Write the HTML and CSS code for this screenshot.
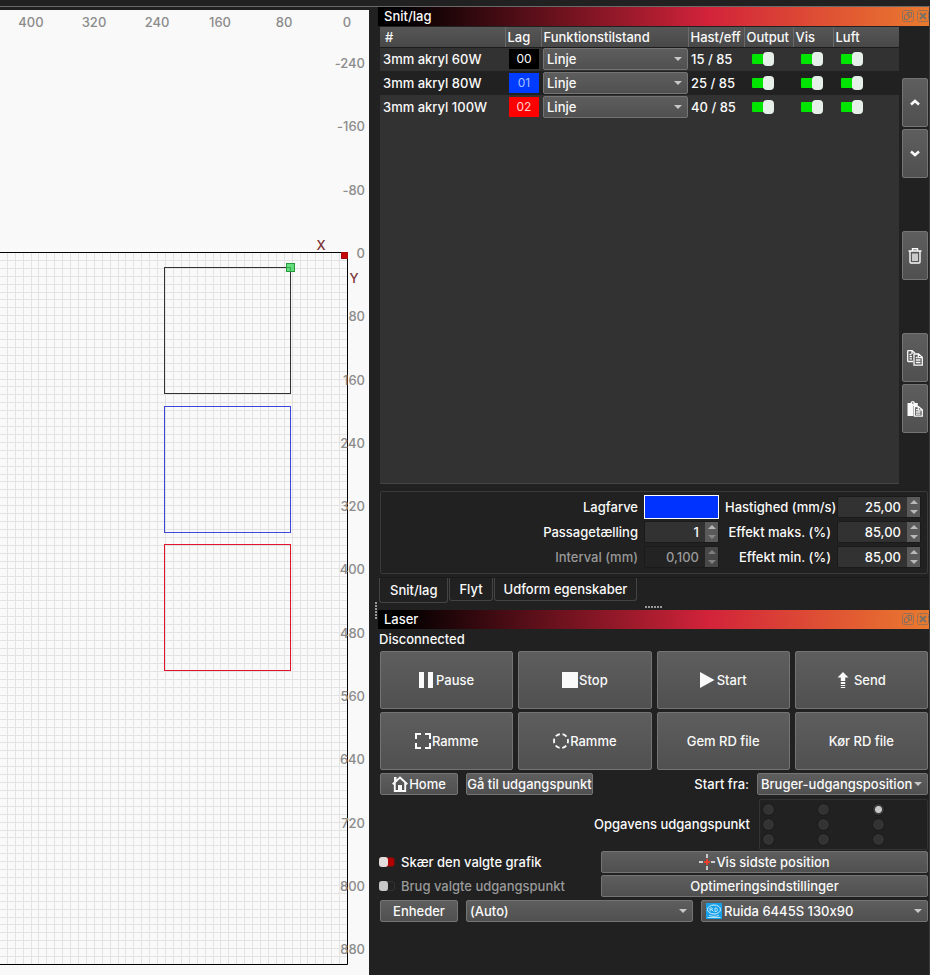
FILE: index.html
```html
<!DOCTYPE html>
<html lang="da">
<head>
<meta charset="utf-8">
<title>Laser</title>
<link rel="stylesheet" href="styles.css">
</head>
<body>
<svg class="defs" aria-hidden="true">
  <symbol id="i-float" viewBox="0 0 12 12"><rect x=".5" y=".5" width="11" height="11" rx="2" fill="none" stroke="currentColor" stroke-dasharray="2 .6"/><path d="M5 2.500h4.500V7H7.500M2.500 5.500l2-1.500h2.500v4L5 9.500H2.500z M4.500 4.500l3 3" fill="none" stroke="currentColor"/></symbol>
  <symbol id="i-close" viewBox="0 0 12 12"><rect x=".5" y=".5" width="11" height="11" rx="2" fill="none" stroke="currentColor" stroke-dasharray="2 .6"/><path d="M3 3l6 6M9 3L3 9" fill="none" stroke="currentColor" stroke-width="2"/></symbol>
</svg>
<header class="topbar"></header>
<main class="app">
  <section class="canvas" aria-label="Arbejdsområde">
    <svg class="bed" viewBox="0 10 369 965" preserveAspectRatio="xMaxYMin slice">
      <g id="grid" class="grid"></g>
      <path class="bed-edge" d="M0 252.500H347.500V964.500H0"/>
      <g id="ruler" class="ruler"></g>
      <rect class="shape black" x="164.500" y="267.500" width="126" height="126"/>
      <rect class="shape blue" x="164.500" y="406.500" width="126" height="126"/>
      <rect class="shape red" x="164.500" y="544.500" width="126" height="126"/>
      <rect class="handle" x="286.500" y="263.500" width="8" height="8"/>
      <rect class="origin" x="341.500" y="252.500" width="6" height="6"/>
      <text class="axis" x="321" y="250">X</text>
      <text class="axis" x="354" y="283">Y</text>
    </svg>
  </section>
  <div class="splitter"><i></i></div>
  <div class="side">
    <section class="cuts">
      <h2 class="dock-title"><span>Snit/lag</span><svg><use href="#i-float"/></svg><svg><use href="#i-close"/></svg></h2>
      <div class="cuts-body">
        <div class="layer-list">
          <table>
            <colgroup><col class="c-name"><col class="c-lag"><col class="c-mode"><col class="c-speed"><col class="c-out"><col class="c-vis"><col></colgroup>
            <thead><tr><th>#</th><th>Lag</th><th>Funktionstilstand</th><th>Hast/eff</th><th>Output</th><th>Vis</th><th>Luft</th></tr></thead>
            <tbody>
              <tr><td>3mm akryl 60W</td><td><span class="chip k">00</span></td><td><span class="pick"><select aria-label="Funktion 00"><option>Linje</option></select></span></td><td>15 / 85</td><td><input class="toggle" type="checkbox" checked aria-label="Output 00"></td><td><input class="toggle" type="checkbox" checked aria-label="Vis 00"></td><td><input class="toggle" type="checkbox" checked aria-label="Luft 00"></td></tr>
              <tr><td>3mm akryl 80W</td><td><span class="chip b">01</span></td><td><span class="pick"><select aria-label="Funktion 01"><option>Linje</option></select></span></td><td>25 / 85</td><td><input class="toggle" type="checkbox" checked aria-label="Output 01"></td><td><input class="toggle" type="checkbox" checked aria-label="Vis 01"></td><td><input class="toggle" type="checkbox" checked aria-label="Luft 01"></td></tr>
              <tr><td>3mm akryl 100W</td><td><span class="chip r">02</span></td><td><span class="pick"><select aria-label="Funktion 02"><option>Linje</option></select></span></td><td>40 / 85</td><td><input class="toggle" type="checkbox" checked aria-label="Output 02"></td><td><input class="toggle" type="checkbox" checked aria-label="Vis 02"></td><td><input class="toggle" type="checkbox" checked aria-label="Luft 02"></td></tr>
            </tbody>
          </table>
        </div>
        <div class="tools">
          <button class="up" aria-label="Op"><svg viewBox="0 0 16 16"><path d="M4 9.500L8 6l4 3.500" fill="none" stroke="currentColor" stroke-width="2.600"/></svg></button>
          <button class="down" aria-label="Ned"><svg viewBox="0 0 16 16"><path d="M4 5.500L8 9l4-3.500" fill="none" stroke="currentColor" stroke-width="2.600"/></svg></button>
          <button class="trash" aria-label="Slet"><svg viewBox="0 0 16 16"><path d="M1.500 3h13M5.500 2.500V.8h5v1.700M3 3.500V14q0 1 1 1h8q1 0 1-1V3.500M6 5.500V13M8 5.500V13M10 5.500V13" fill="none" stroke="currentColor" stroke-width="1.400"/></svg></button>
          <button class="copy" aria-label="Kopiér"><svg viewBox="0 0 16 16"><path d="M6 11.500H1.500q-.8 0-.8-.8V1.300q0-.8.800-.8H5L8 3.300M5 .8V4M2.500 4.500h2M2.500 6.700H5M2.500 8.900H5" fill="none" stroke="currentColor" stroke-width="1.300"/><path d="M7 4h4.500L15.300 7.300v7.900H7z M11.300 4v3.600h4M8.800 7.500h1.500M8.800 10h4.700M8.800 12.500h4.700" fill="none" stroke="currentColor" stroke-width="1.300"/></svg></button>
          <button class="paste" aria-label="Sæt ind"><svg viewBox="0 0 16 16"><path d="M1 2h2.500Q4 0 5.800 0T8 2h2.800v3H6.500v10H1q-.5 0-.5-.5v-12Q.5 2 1 2z" fill="currentColor"/><circle cx="5.800" cy="2" r=".8" fill="#555"/><path d="M7.500 5.600h4l3.800 3.300v6.300H7.500z M11.300 5.600v3.500h4M9 8.600h1.500M9 11h4.500M9 13.200h4.500" fill="none" stroke="currentColor" stroke-width="1.300"/></svg></button>
        </div>
      </div>
      <div class="props">
        <label for="farve">Lagfarve</label>
        <button id="farve" class="swatch" aria-label="Lagfarve"></button>
        <label for="hast">Hastighed (mm/s)</label>
        <span class="spin"><input id="hast" value="25,00"><button aria-label="Mere"></button><button aria-label="Mindre"></button></span>
        <label for="pass">Passagetælling</label>
        <span class="spin min"><input id="pass" value="1"><button aria-label="Mere"></button><button aria-label="Mindre"></button></span>
        <label for="maks">Effekt maks. (%)</label>
        <span class="spin"><input id="maks" value="85,00"><button aria-label="Mere"></button><button aria-label="Mindre"></button></span>
        <label for="interval" class="dim">Interval (mm)</label>
        <span class="spin off"><input id="interval" value="0,100" disabled><button aria-label="Mere" disabled></button><button aria-label="Mindre" disabled></button></span>
        <label for="min">Effekt min. (%)</label>
        <span class="spin"><input id="min" value="85,00"><button aria-label="Mere"></button><button aria-label="Mindre"></button></span>
      </div>
      <nav class="tabs"><button class="on">Snit/lag</button><button>Flyt</button><button>Udform egenskaber</button></nav>
      <div class="grip"></div>
    </section>
    <section class="laser">
      <h2 class="dock-title"><span>Laser</span><svg><use href="#i-float"/></svg><svg><use href="#i-close"/></svg></h2>
      <p class="status">Disconnected</p>
      <div class="actions">
        <button><svg viewBox="0 0 16 16"><path d="M0 0h5v16H0zM9 0h5v16H9z" fill="currentColor"/></svg>Pause</button>
        <button><svg viewBox="0 0 16 16"><path d="M0 0h16v16H0z" fill="currentColor"/></svg>Stop</button>
        <button><svg viewBox="0 0 16 16"><path d="M0 0l14.500 8L0 16z" fill="currentColor"/></svg>Start</button>
        <button><svg viewBox="0 0 16 16"><path d="M6 0l5.500 5.500H8.200V9H3.800V5.500H.5zM3.800 10h4.400v2H3.800zM3.800 13h4.400v1H3.800zM3.800 15h4.400v1H3.800z" fill="currentColor"/></svg>Send</button>
        <button><svg viewBox="0 0 16 16"><path d="M1 6V1h5M10 1h5v5M15 10v5h-5M6 15H1v-5" fill="none" stroke="currentColor" stroke-width="2"/></svg>Ramme</button>
        <button><svg viewBox="0 0 16 16"><circle cx="8" cy="8" r="7" fill="none" stroke="currentColor" stroke-width="1.800" stroke-dasharray="4.600 2.730" stroke-dashoffset="2.300"/></svg>Ramme</button>
        <button>Gem RD file</button>
        <button>Kør RD file</button>
      </div>
      <div class="row home-row">
        <button class="w78"><svg viewBox="0 0 16 16"><path d="M.7 8.200L8 1.500l7.300 6.700M2.800 7v8h10.400V7" fill="none" stroke="currentColor" stroke-width="1.900"/><path d="M6 9h4v6H6zM2 1h2.500v4L2 7z" fill="currentColor"/></svg>Home</button>
        <button class="w127">Gå til udgangspunkt</button>
        <label for="fra" class="push">Start fra:</label>
        <span class="pick w171"><select id="fra"><option>Bruger-udgangsposition</option></select></span>
      </div>
      <div class="job">
        <span>Opgavens udgangspunkt</span>
        <div class="dots" role="radiogroup" aria-label="Opgavens udgangspunkt">
          <input type="radio" name="o" aria-label="1"><input type="radio" name="o" aria-label="2"><input type="radio" name="o" aria-label="3" checked>
          <input type="radio" name="o" aria-label="4"><input type="radio" name="o" aria-label="5"><input type="radio" name="o" aria-label="6">
          <input type="radio" name="o" aria-label="7"><input type="radio" name="o" aria-label="8"><input type="radio" name="o" aria-label="9">
        </div>
      </div>
      <div class="row opt-row">
        <label><input class="mini red" type="checkbox">Skær den valgte grafik</label>
        <button class="wide"><svg viewBox="0 0 16 16"><path d="M0 8h4M12 8h4M8 0v4M8 12v4" stroke="currentColor" stroke-width="1.400"/><path d="M8 5v6M5 8h6" stroke="#e8402f" stroke-width="2"/></svg>Vis sidste position</button>
      </div>
      <div class="row opt-row">
        <label class="dim"><input class="mini" type="checkbox" disabled>Brug valgte udgangspunkt</label>
        <button class="wide">Optimeringsindstillinger</button>
      </div>
      <div class="row device-row">
        <button class="w78">Enheder</button>
        <span class="pick grow"><select aria-label="Port"><option>(Auto)</option></select></span>
        <span class="pick grow device"><svg viewBox="0 0 16 16"><rect width="16" height="16" fill="#16a0e8"/><ellipse cx="8" cy="6.500" rx="6.500" ry="4.500" fill="none" stroke="#d8f1ff"/><path d="M4 8.500V5h2q1 .8 0 1.700H4M6 7l1.500 1.500M9 5v3.500h1.500q2-1.700 0-3.500zM3 12.500q5 2 10 0M1.500 14.500h13" fill="none" stroke="#d8f1ff" stroke-width=".8"/></svg><select aria-label="Enhed"><option>Ruida 6445S 130x90</option></select></span>
      </div>
    </section>
  </div>
</main>
<script src="app.js"></script>
</body>
</html>
```
FILE: styles.css
```css
* { box-sizing: border-box; }
body {
  margin: 0;
  min-height: 100vh;
  display: flex;
  flex-direction: column;
  overflow: hidden;
  background: #212121;
  color: #fafafa;
  font: 500 13px/16px Inter, "Liberation Sans", sans-serif;
  font-variant-ligatures: no-contextual;
}
button, input, select { font: inherit; font-variant-ligatures: inherit; color: inherit; margin: 0; padding: 0; }
.defs { position: absolute; width: 0; height: 0; }
.topbar { height: 7px; border-bottom: 1px solid #6a6a6a; }
.app { flex: 1; display: flex; border-right: 1px solid #3a3a3a; }

/* drawing area */
.canvas { flex: 1; min-width: 0; margin-top: 3px; background: #f9f9f9; position: relative; }
.bed { position: absolute; inset: 0; width: 100%; height: 100%; }
.grid line { stroke: #e3e3e3; shape-rendering: crispEdges; }
.bed-edge { fill: none; stroke: #000; }
.ruler text { fill: #8c8c8c; font-size: 13px; }
.axis { fill: #7c3434; font-size: 13px; text-anchor: middle; }
.shape { fill: none; }
.black { stroke: #333; }
.blue { stroke: #3c46d8; }
.red { stroke: #e0142c; }
.handle { fill: #35d455; fill-opacity: .75; stroke: #269a3c; }
.origin { fill: #c80808; stroke: #a01010; }

.splitter { width: 9px; display: flex; align-items: flex-end; padding: 0 1px 356px 6px; }
.splitter i { width: 2px; height: 17px; background: repeating-linear-gradient(#999 0 2px, transparent 2px 3px); }
.side { width: 551px; }

/* dock headings */
.dock-title {
  margin: 0;
  height: 19px;
  padding: 0 0 1px 6px;
  display: flex;
  align-items: center;
  gap: 3px;
  font-size: 13px;
  font-weight: 500;
  background: linear-gradient(90deg, #000 4%, #d2233a 60%, #ea7a2e 100%);
}
.dock-title span { flex: 1; }
.dock-title svg { width: 12px; height: 12px; color: #7d7163; }

/* layer list */
.cuts-body { display: flex; gap: 3px; padding: 1px 1px 0 2px; }
.layer-list { flex: 1; background: #323232; border-bottom: 1px solid #444; }
table { width: 100%; border-collapse: collapse; table-layout: fixed; }
.c-name { width: 125px; }
.c-lag { width: 36px; }
.c-mode { width: 147px; }
.c-speed { width: 56px; }
.c-out { width: 49px; }
.c-vis { width: 40px; }
th {
  height: 20px;
  padding: 0 0 0 2px;
  text-align: left;
  font-weight: 500;
  white-space: nowrap;
  background: linear-gradient(#565656, #484848);
  border-right: 1px solid #6a6a6a;
  border-bottom: 1px solid #1c1c1c;
}
th:first-child { padding-left: 5px; }
th:last-child { border-right: 0; }
td { height: 24px; padding: 0 0 0 3px; white-space: nowrap; }
td:nth-child(2) { padding-left: 4px; }
td:nth-child(3) { padding: 0 0 0 2px; }
td:nth-child(n+5) { padding-left: 8px; }
tbody tr:nth-child(even) { background: #212121; }
.chip { display: block; width: 30px; line-height: 20px; text-align: center; font-size: 12px; font-weight: 400; }
.k { background: #000; }
.b { background: #003cff; color: #a8c0ff; }
.r { background: #ff0000; color: #ffd0d0; }

.pick { position: relative; display: block; }
.pick select {
  appearance: none;
  display: block;
  width: 100%;
  height: 22px;
  padding: 0 14px 0 3px;
  background: linear-gradient(#5e5e5e, #505050);
  border: 1px solid #747474;
  border-radius: 2px;
}
.pick::after {
  content: "";
  position: absolute;
  right: 6px;
  top: 9px;
  border: 4px solid transparent;
  border-top-color: #c8c8c8;
  border-bottom: 0;
  pointer-events: none;
}
.toggle {
  appearance: none;
  display: block;
  width: 22px;
  height: 14px;
  background: linear-gradient(#00e600, #00e600) left center / 12px 10px no-repeat;
  border-radius: 4px;
  position: relative;
}
.toggle::after { content: ""; position: absolute; right: 0; top: 0; width: 11px; height: 14px; border-radius: 4px; background: #e6f0e8; }

.tools { width: 26px; display: grid; grid-template-rows: repeat(9, 49px); gap: 2px; }
.tools button, .actions button, .row button {
  display: flex;
  align-items: center;
  justify-content: center;
  white-space: nowrap;
  background: linear-gradient(#5e5e5e, #505050);
  border: 1px solid #747474;
  border-radius: 2px;
}
.tools svg, .actions svg, .row svg { width: 16px; height: 16px; flex: none; }
.actions button, .row button { gap: 1px; }
.up { grid-row: 2; }
.down { grid-row: 3; }
.trash { grid-row: 5; }
.copy { grid-row: 7; }
.paste { grid-row: 8; }

/* layer properties */
.props {
  margin: 7px 1px 0 2px;
  padding: 2px 6px 4px 0;
  display: grid;
  grid-template-columns: 1fr 75px 106px 84px;
  grid-auto-rows: 25px;
  column-gap: 6px;
  align-items: center;
  border: 1px solid #3a3a3a;
  border-radius: 2px;
}
.props label { text-align: right; white-space: nowrap; }
.swatch { height: 24px; background: #0033ff; border: 1px solid #fff; }
.spin {
  height: 22px;
  display: grid;
  grid-template: 1fr 1fr / 1fr 13px;
  background: #323232;
  border: 1px solid #1a1a1a;
  border-radius: 2px;
}
.spin input { grid-row: 1 / 3; width: 100%; min-width: 0; padding-right: 6px; text-align: right; background: none; border: 0; }
.spin button { background: #5a5a5a; border: 0; display: grid; place-items: center; }
.spin button::after { content: ""; border: 4px solid transparent; border-top: 0; border-bottom-color: #b8b8b8; }
.spin button:last-child::after { border-top: 4px solid #b8b8b8; border-bottom: 0; }
.spin.min button:last-child::after { border-top-color: #858585; }
.spin.off { background: #232323; color: #999; }
.spin.off button { background: #484848; }
.spin.off button::after { border-bottom-color: #808080; }
.spin.off button:last-child::after { border-top-color: #808080; }
.dim { color: #999; }

.tabs { margin: 3px 0 0 1px; height: 26px; display: flex; gap: 1px; align-items: flex-start; border-top: 1px solid #191919; }
.tabs button { height: 23px; padding: 0 9px; background: none; border: 1px solid #444; border-top: 0; border-radius: 0 0 3px 3px; }
.tabs .on { height: 25px; padding: 0 10px; }
.grip { width: 18px; height: 2px; margin: 3px auto 2px; background: repeating-linear-gradient(90deg, #999 0 2px, transparent 2px 3px); }

/* laser dock */
.status { margin: 0; padding: 2px 0 4px 1px; }
.actions { display: grid; grid-template-columns: repeat(4, 1fr); grid-auto-rows: 58px; gap: 3px 5px; padding: 0 1px 0 2px; }
.row { display: flex; align-items: center; gap: 8px; padding: 0 1px 0 2px; }
.row button { height: 22px; }
.home-row { margin-top: 3px; }
.w78 { width: 78px; }
.w127 { width: 127px; }
.w171 { width: 171px; }
.push { margin-left: auto; }
.job { display: flex; justify-content: flex-end; align-items: center; gap: 9px; margin: 4px 1px 1px 0; }
.job span { padding-bottom: 2px; }
.dots {
  width: 169px;
  height: 51px;
  padding: 3px 0 0 2px;
  display: grid;
  grid-template-columns: repeat(3, 1fr);
  grid-auto-rows: 15px;
  border: 1px solid #333;
  border-radius: 2px;
}
.dots input { appearance: none; width: 13px; height: 13px; border-radius: 50%; background: #333; border: 1px solid #191919; }
.dots input:checked { background: radial-gradient(circle, #c8c8c8 3px, #383838 4px); }
.opt-row { justify-content: space-between; padding-left: 1px; margin-bottom: 2px; }
.opt-row label { display: flex; align-items: center; gap: 6px; }
.wide { width: 327px; }
.mini {
  appearance: none;
  width: 16px;
  height: 10px;
  border-radius: 3px;
  border: 1px solid #333;
  background: #222;
  position: relative;
}
.mini.red { background: #b00000; border-color: #5c1414; }
.mini::after { content: ""; position: absolute; left: -1px; top: -1px; width: 9px; height: 10px; border-radius: 3px; background: #c8c8c8; }
.mini.red::after { background: #e2dcdc; }
.device-row { margin-top: 3px; }
.grow { flex: 1; }
.device svg { position: absolute; left: 5px; top: 3px; pointer-events: none; }
.device select { padding-left: 22px; }
```
FILE: app.js
```js
// 10 mm grid and 80 mm ruler marks, counted from the machine origin.
const NS = "http://www.w3.org/2000/svg";
const ORIGIN = { x: 347, y: 252 };
const STEP = 712 / 90;

function add(parent, name, attrs, text) {
  const el = document.createElementNS(NS, name);
  for (const key in attrs) el.setAttribute(key, attrs[key]);
  if (text !== undefined) el.textContent = text;
  parent.appendChild(el);
}

const grid = document.getElementById("grid");
const ruler = document.getElementById("ruler");

for (let i = 1; i < 44; i++) {
  const x = Math.round(ORIGIN.x - i * STEP) + 0.5;
  add(grid, "line", { x1: x, x2: x, y1: 253, y2: 964 });
}
for (let i = 1; i < 90; i++) {
  const y = Math.round(ORIGIN.y + i * STEP) + 0.5;
  add(grid, "line", { x1: 0, x2: 347, y1: y, y2: y });
}
for (let mm = 0; mm <= 400; mm += 80) {
  add(ruler, "text", { x: Math.round(347 - mm / 10 * STEP), y: 27, "text-anchor": "middle" }, mm);
}
for (let mm = -240; mm <= 880; mm += 80) {
  add(ruler, "text", { x: 365, y: Math.round(258 + mm / 10 * STEP), "text-anchor": "end" }, mm);
}
```
